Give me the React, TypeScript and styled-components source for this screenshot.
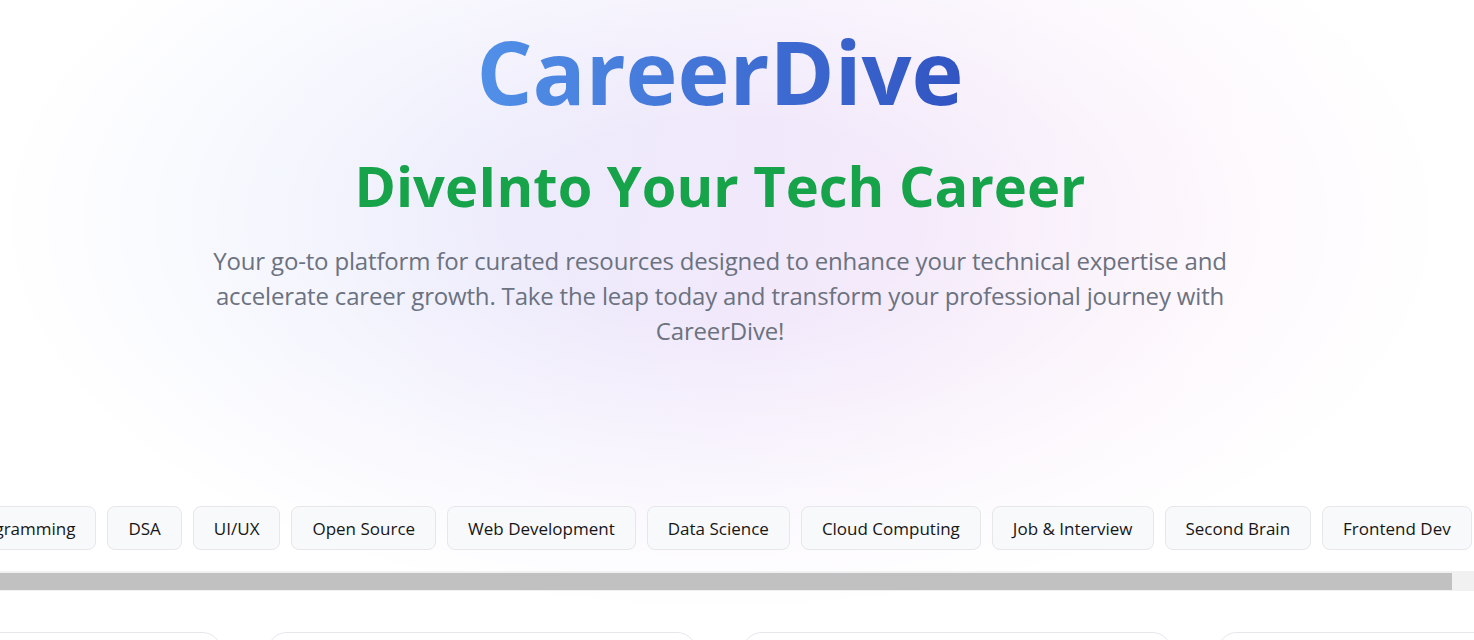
import styled, { createGlobalStyle } from "styled-components";

const topics = [
  "Programming",
  "DSA",
  "UI/UX",
  "Open Source",
  "Web Development",
  "Data Science",
  "Cloud Computing",
  "Job & Interview",
  "Second Brain",
  "Frontend Dev",
];

const resources = [
  { title: "Roadmaps", text: "Step-by-step guides for every tech path." },
  { title: "Practice Sheets", text: "Handpicked problems to sharpen your skills." },
  { title: "Interview Prep", text: "Questions, tips and mock rounds that matter." },
  { title: "Tools & Notes", text: "Everything you need to build your second brain." },
];

const App = () => {
  return (
    <StyledPage>
      <GlobalStyle />
      <StyledHero>
        <StyledBrand>CareerDive</StyledBrand>
        <StyledHeadline>DiveInto Your Tech Career</StyledHeadline>
        <StyledLead>
          Your go-to platform for curated resources designed to enhance your technical expertise and
          accelerate career growth. Take the leap today and transform your professional journey with
          CareerDive!
        </StyledLead>
      </StyledHero>

      <StyledTopics>
        <StyledTopicTrack>
          {topics.map((topic) => (
            <StyledChip key={topic}>{topic}</StyledChip>
          ))}
        </StyledTopicTrack>
      </StyledTopics>
      <StyledScrollbar>
        <StyledThumb />
      </StyledScrollbar>

      <StyledCards>
        <StyledCardTrack>
          {resources.map((item) => (
            <StyledCard key={item.title}>
              <StyledCardTitle>{item.title}</StyledCardTitle>
              <StyledCardText>{item.text}</StyledCardText>
            </StyledCard>
          ))}
        </StyledCardTrack>
      </StyledCards>
    </StyledPage>
  );
};

export default App;

const GlobalStyle = createGlobalStyle`
  html {
    scrollbar-width: none;
  }
  body {
    margin: 0;
    background: #fff;
    font-family: "Open Sans", "Noto Sans", sans-serif;
  }
  * {
    box-sizing: border-box;
  }
`;

const StyledPage = styled.div`
  min-height: 100vh;
  overflow-x: hidden;
  background:
    radial-gradient(
      ellipse 740px 400px at 720px 220px,
      rgba(255, 255, 255, 0) 0%,
      rgba(255, 255, 255, 0) 25%,
      rgba(255, 255, 255, 0.7) 72%,
      #fff 98%
    ),
    linear-gradient(100deg, #e8edfc 15%, #f1e9fb 50%, #fbecf8 85%);
  background-repeat: no-repeat;
  background-size: 100% 640px;
`;

const StyledHero = styled.section`
  display: flex;
  flex-direction: column;
  align-items: center;
  max-width: 1440px;
  padding-top: 27px;
  text-align: center;
`;

const StyledBrand = styled.h1`
  margin: 0;
  font-size: 88px;
  font-weight: 700;
  line-height: 1;
  background: linear-gradient(90deg, #5190e8, #3154c2);
  -webkit-background-clip: text;
  background-clip: text;
  color: transparent;
`;

const StyledHeadline = styled.h2`
  margin: 42px 0 0;
  font-size: 56px;
  font-weight: 700;
  line-height: 1;
  color: #16a34a;
`;

const StyledLead = styled.p`
  margin: 30px 0 0;
  max-width: 1060px;
  font-size: 24px;
  line-height: 35px;
  letter-spacing: -0.17px;
  color: #6b7280;
`;

const StyledTopics = styled.div`
  margin-top: 158px;
  padding-bottom: 21px;
  overflow: hidden;
`;

const StyledTopicTrack = styled.div`
  display: flex;
  gap: 11px;
  width: max-content;
  margin-left: -54px;
`;

const StyledChip = styled.button`
  height: 44px;
  padding: 0 20px;
  border: 1px solid #e5e7eb;
  border-radius: 8px;
  background: #f8f9fb;
  color: #161616;
  font-family: inherit;
  font-size: 17px;
  white-space: nowrap;
  cursor: pointer;
`;

const StyledScrollbar = styled.div`
  height: 20px;
  padding: 2px 22px 1px 0;
  background: #f1f1f1;
`;

const StyledThumb = styled.div`
  height: 100%;
  background: #c1c1c1;
`;

const StyledCards = styled.div`
  margin-top: 41px;
  overflow: hidden;
`;

const StyledCardTrack = styled.div`
  display: flex;
  gap: 45px;
  width: max-content;
  margin-left: -208px;
`;

const StyledCard = styled.div`
  width: 430px;
  height: 260px;
  padding: 28px;
  border: 1px solid #e5e7eb;
  border-radius: 20px;
  background: #fff;
`;

const StyledCardTitle = styled.h3`
  margin: 0 0 8px;
  font-size: 22px;
  color: #1f2937;
`;

const StyledCardText = styled.p`
  margin: 0;
  font-size: 16px;
  color: #6b7280;
`;
